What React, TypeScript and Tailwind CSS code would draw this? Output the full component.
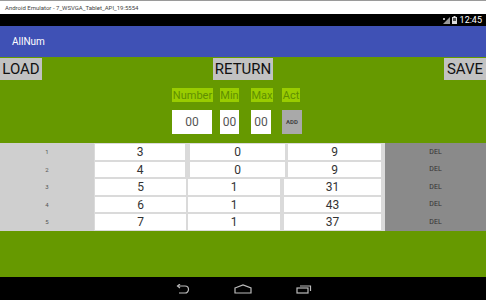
import React from "react";

const rowsData = [
  { i: 1, a: "3", b: "0", c: "9", w: [90, 95, 93], g: [5, 3] },
  { i: 2, a: "4", b: "0", c: "9", w: [90, 95, 93], g: [5, 3] },
  { i: 3, a: "5", b: "1", c: "31", w: [91, 92, 97], g: [2, 4] },
  { i: 4, a: "6", b: "1", c: "43", w: [91, 92, 97], g: [2, 4] },
  { i: 5, a: "7", b: "1", c: "37", w: [91, 92, 97], g: [2, 4] },
];
const heights = [18, 17, 18, 17, 18];

export default function App() {
  return (
    <div
      className="w-[486px] h-[300px] flex flex-col overflow-hidden bg-black"
      style={{ fontFamily: "Roboto, 'Noto Sans', sans-serif" }}
    >
      {/* Window title bar */}
      <div className="h-[14px] bg-white border-t border-[#9a9a9a] flex items-center pl-[5px]">
        <span className="text-[6px] leading-none text-[#444]">
          Android Emulator - 7_WSVGA_Tablet_API_19:5554
        </span>
      </div>
      {/* Status bar */}
      <div className="h-[12px] bg-black flex items-center justify-end pr-[4px] gap-[2px]">
        <svg width="7" height="7" viewBox="0 0 7 7">
          <path d="M0 7 L7 0 L7 7 Z" fill="#9a9a9a" />
          <path d="M0 1 L2 3 M2 1 L0 3" stroke="#ddd" strokeWidth="0.8" />
        </svg>
        <svg width="5" height="8" viewBox="0 0 5 8">
          <rect x="1.5" y="0" width="2" height="1" fill="#ddd" />
          <rect x="0" y="1" width="5" height="7" fill="#ddd" />
          <rect x="1" y="2" width="3" height="3" fill="#555" />
        </svg>
        <span className="text-[9px] leading-none text-white ml-[1px]">12:45</span>
      </div>
      {/* App bar */}
      <div className="h-[31px] bg-[#3f51b5] flex items-center pl-[12px]">
        <span className="text-[10px] text-white leading-none">AllNum</span>
      </div>
      {/* Content */}
      <div className="h-[220px] bg-[#669900] flex flex-col">
        <div className="mt-[1px] h-[22px] flex justify-between">
          <div className="w-[42px] bg-[#c2c2c2] flex items-center justify-center text-[15px] text-[#111] leading-none">
            LOAD
          </div>
          <div className="w-[60px] bg-[#c2c2c2] flex items-center justify-center text-[15px] text-[#111] leading-none">
            RETURN
          </div>
          <div className="w-[42px] bg-[#c2c2c2] flex items-center justify-center text-[15px] text-[#111] leading-none">
            SAVE
          </div>
        </div>
        {/* Labels */}
        <div className="mt-[8px] h-[14px] flex pl-[172px] text-[11px] leading-none text-[#5f8f00]">
          <div className="w-[41px] bg-[#99cc00] flex items-center justify-center">Number</div>
          <div className="ml-[7px] w-[19px] bg-[#99cc00] flex items-center justify-center">Min</div>
          <div className="ml-[12px] w-[22px] bg-[#99cc00] flex items-center justify-center">Max</div>
          <div className="ml-[9px] w-[18px] bg-[#99cc00] flex items-center justify-center">Act</div>
        </div>
        {/* Inputs */}
        <div className="mt-[8px] h-[24px] flex pl-[172px] text-[12px] leading-none text-[#555]">
          <div className="w-[40px] bg-white flex items-center justify-center">00</div>
          <div className="ml-[8px] w-[19px] bg-white flex items-center justify-center">00</div>
          <div className="ml-[12px] w-[20px] bg-white flex items-center justify-center">00</div>
          <div className="ml-[11px] w-[20px] bg-[#a9a9a9] flex items-center justify-center text-[6px] font-bold text-[#444]">
            ADD
          </div>
        </div>
        {/* Table */}
        <div className="mt-[9px] flex flex-col">
          {rowsData.map((r, idx) => (
            <div key={r.i} className="flex" style={{ height: heights[idx] }}>
              <div className="w-[94px] bg-[#cfcfcf] flex items-center justify-center text-[6px] text-[#555] leading-none">
                {r.i}
              </div>
              <div className="flex-1 bg-[#dadada] flex py-[1px] pl-[1px] text-[12px] text-[#333] leading-none">
                <div className="bg-white flex items-center justify-center" style={{ width: r.w[0] }}>
                  {r.a}
                </div>
                <div
                  className="bg-white flex items-center justify-center"
                  style={{ width: r.w[1], marginLeft: r.g[0] }}
                >
                  {r.b}
                </div>
                <div
                  className="bg-white flex items-center justify-center"
                  style={{ width: r.w[2], marginLeft: r.g[1] }}
                >
                  {r.c}
                </div>
              </div>
              <div className="w-[101px] bg-[#8a8a8a] flex items-center justify-center text-[7px] text-[#333] leading-none">
                DEL
              </div>
            </div>
          ))}
        </div>
      </div>
      {/* Nav bar */}
      <div className="h-[23px] bg-black flex items-center justify-center">
        <svg width="16" height="10" viewBox="0 0 16 10" className="mr-[44px]">
          <path
            d="M4 2 H11 A3.5 3.5 0 0 1 11 9 H5"
            fill="none"
            stroke="#bbb"
            strokeWidth="1.2"
          />
          <path d="M6 0 L3.5 2 L6 4" fill="none" stroke="#bbb" strokeWidth="1.2" />
        </svg>
        <svg width="18" height="10" viewBox="0 0 18 10">
          <path d="M1 4 L9 1 L17 4 V9 H1 Z" fill="none" stroke="#bbb" strokeWidth="1.2" />
        </svg>
        <svg width="16" height="10" viewBox="0 0 16 10" className="ml-[44px]">
          <rect x="1" y="4" width="11" height="5" fill="none" stroke="#bbb" strokeWidth="1.2" />
          <path d="M4 2 H14.5 V7" fill="none" stroke="#bbb" strokeWidth="1.2" />
        </svg>
      </div>
    </div>
  );
}
